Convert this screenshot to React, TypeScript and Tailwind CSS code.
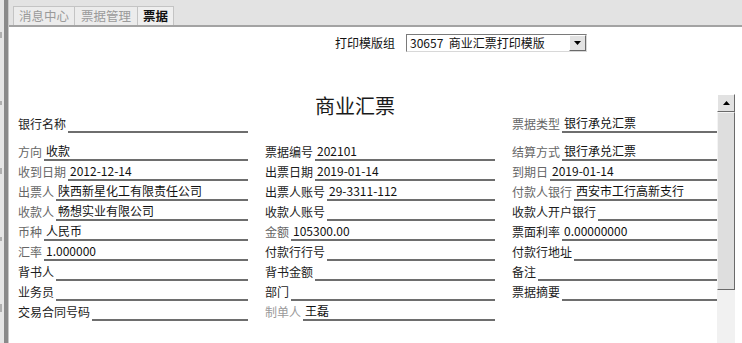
import React from "react";

type F = { label: string; value?: string; tone: "dark" | "gray" | "light" };

const col1: F[] = [
  { label: "方向", value: "收款", tone: "gray" },
  { label: "收到日期", value: "2012-12-14", tone: "gray" },
  { label: "出票人", value: "陕西新星化工有限责任公司", tone: "gray" },
  { label: "收款人", value: "畅想实业有限公司", tone: "gray" },
  { label: "币种", value: "人民币", tone: "gray" },
  { label: "汇率", value: "1.000000", tone: "gray" },
  { label: "背书人", tone: "dark" },
  { label: "业务员", tone: "dark" },
  { label: "交易合同号码", tone: "dark" },
];

const col2: F[] = [
  { label: "票据编号", value: "202101", tone: "dark" },
  { label: "出票日期", value: "2019-01-14", tone: "dark" },
  { label: "出票人账号", value: "29-3311-112", tone: "dark" },
  { label: "收款人账号", tone: "dark" },
  { label: "金额", value: "105300.00", tone: "gray" },
  { label: "付款行行号", tone: "dark" },
  { label: "背书金额", tone: "dark" },
  { label: "部门", tone: "dark" },
  { label: "制单人", value: "王磊", tone: "light" },
];

const col3: F[] = [
  { label: "结算方式", value: "银行承兑汇票", tone: "gray" },
  { label: "到期日", value: "2019-01-14", tone: "gray" },
  { label: "付款人银行", value: "西安市工行高新支行", tone: "gray" },
  { label: "收款人开户银行", tone: "dark" },
  { label: "票面利率", value: "0.00000000", tone: "dark" },
  { label: "付款行地址", tone: "dark" },
  { label: "备注", tone: "dark" },
  { label: "票据摘要", tone: "dark" },
];

function labelCls(t: F["tone"]) {
  if (t === "gray") return "text-[#666666]";
  if (t === "light") return "text-[#9a9a9a]";
  return "text-[#1c1c1c]";
}

function Row({ f, first = false }: { f: F; first?: boolean }) {
  return (
    <div className={first ? "flex items-end h-[17px]" : "flex items-end h-[20px]"}>
      <span className={`text-[12px] leading-[16px] pb-[1px] whitespace-nowrap ${labelCls(f.tone)}`}>{f.label}</span>
      <div className="flex-1 ml-[2px] pl-[2px] border-b-2 border-[#6e6e6e] text-[12px] leading-[16px] text-[#111111] whitespace-nowrap">
        {f.value ? f.value : "\u00a0"}
      </div>
    </div>
  );
}

export default function App() {
  return (
    <div
      className="w-[742px] h-[343px] bg-white flex overflow-hidden"
      style={{ fontFamily: '"Noto Sans CJK SC", "Noto Sans", sans-serif' }}
    >
      {/* left strip */}
      <div className="w-[4px] bg-[#e6e6e6] flex flex-col justify-around">
        <div className="h-[6px] bg-[#b0b0b0] w-[2px]" />
        <div className="h-[4px] bg-[#b0b0b0] w-[2px]" />
        <div className="h-[6px] bg-[#b0b0b0] w-[2px]" />
        <div className="h-[4px] bg-[#b0b0b0] w-[2px]" />
        <div className="h-[8px] bg-[#b0b0b0] w-[2px]" />
      </div>
      <div className="w-[4px] bg-[#8a8a8a]" />
      <div className="w-[1px] bg-[#c8c8c8]" />

      <div className="flex-1 flex flex-col">
        {/* tab bar */}
        <div className="h-[27px] bg-[#e3e3e3] border-b-2 border-[#a3a3a3] flex items-end pl-[4px]">
          <div className="h-[19px] px-[5px] bg-[#ececec] border-t border-l border-r border-[#c4c4c4] text-[12.5px] leading-[18px] text-[#9a9a9a]">消息中心</div>
          <div className="h-[19px] px-[6px] bg-[#ececec] border-t border-r border-[#c4c4c4] text-[12.5px] leading-[18px] text-[#9a9a9a]">票据管理</div>
          <div className="h-[19px] px-[5px] bg-[#efefef] border-t border-r border-[#c4c4c4] text-[12.5px] leading-[18px] font-bold text-[#111111]">票据</div>
        </div>

        {/* select row */}
        <div className="h-[67px] pt-[7px] pl-[326px] flex items-start">
          <div className="flex items-center h-[18px]">
            <span className="text-[12px] leading-[16px] text-[#111111] mr-[11px]">打印模版组</span>
            <div className="w-[181px] h-[18px] border border-t-[#7a7a7a] border-l-[#7a7a7a] border-r-[#d8d8d8] border-b-[#d8d8d8] bg-white flex items-center justify-between">
              <span className="pl-[3px] text-[12px] leading-[16px] text-[#111111] whitespace-pre">30657  商业汇票打印模版</span>
              <div className="w-[17px] h-[16px] bg-[#e2e2e2] border border-t-white border-l-white border-r-[#6a6a6a] border-b-[#6a6a6a] flex items-center justify-center">
                <svg width="7" height="4" viewBox="0 0 7 4"><polygon points="0,0 7,0 3.5,4" fill="#000" /></svg>
              </div>
            </div>
          </div>
        </div>

        {/* body */}
        <div className="flex-1 flex">
          <div className="flex-1 flex flex-col">
            <div className="h-[22px] pl-[306px] text-[20px] leading-[24px] text-[#1a1a1a] whitespace-nowrap">商业汇票</div>
            <div className="grid grid-cols-[230px_230px_205px] gap-x-[17px] pl-[9px]">
              <div className="flex flex-col">
                <Row first f={{ label: "银行名称", tone: "dark" }} />
                <div className="h-[8px]" />
                {col1.map((f) => (
                  <Row key={f.label} f={f} />
                ))}
              </div>
              <div className="flex flex-col">
                <div className="h-[25px]" />
                {col2.map((f) => (
                  <Row key={f.label} f={f} />
                ))}
              </div>
              <div className="flex flex-col">
                <Row first f={{ label: "票据类型", value: "银行承兑汇票", tone: "gray" }} />
                <div className="h-[8px]" />
                {col3.map((f) => (
                  <Row key={f.label} f={f} />
                ))}
              </div>
            </div>
          </div>

          {/* scrollbar */}
          <div className="w-[18px] mr-[7px] flex flex-col">
            <div className="h-[18px] bg-[#e2e2e2] border border-t-white border-l-white border-r-[#6a6a6a] border-b-[#6a6a6a] flex items-center justify-center">
              <svg width="7" height="4" viewBox="0 0 7 4"><polygon points="0,4 7,4 3.5,0" fill="#000" /></svg>
            </div>
            <div className="h-[178px] bg-[#dedede] border border-t-[#f4f4f4] border-l-[#f4f4f4] border-r-[#6a6a6a] border-b-[#6a6a6a]" />
            <div className="flex-1 bg-[#f1f1f1]" />
          </div>
        </div>
      </div>
    </div>
  );
}
